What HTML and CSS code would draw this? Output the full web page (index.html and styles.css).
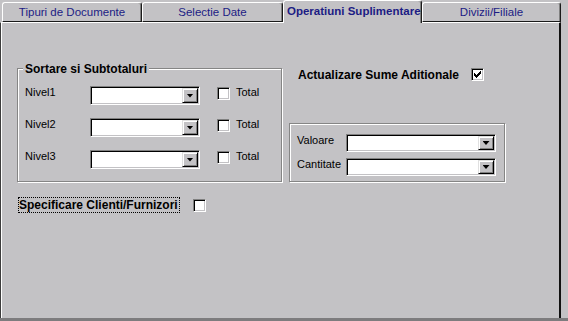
FILE: index.html
```html
<!DOCTYPE html>
<html lang="ro">
<head>
  <meta charset="UTF-8" />
  <meta name="viewport" content="width=device-width, initial-scale=1.0"/>
  <title>Operatiuni Suplimentare</title>
  <link rel="stylesheet" href="styles.css">
</head>
<body>
  <div class="window">
    <div class="tabs">
      <div class="tab tab-1">Tipuri de Documente</div>
      <div class="tab tab-2">Selectie Date</div>
      <div class="tab tab-3 active">Operatiuni Suplimentare</div>
      <div class="tab tab-4">Divizii/Filiale</div>
    </div>

    <div class="panel">
      <div class="main-row">
        <div class="group sort-group">
          <span class="group-title">Sortare si Subtotaluri</span>

          <div class="level-row">
            <span class="label level-label">Nivel1</span>
            <div class="combo level-combo"><span class="combo-btn"></span></div>
            <span class="check total-check"></span>
            <span class="label total-label">Total</span>
          </div>

          <div class="level-row">
            <span class="label level-label">Nivel2</span>
            <div class="combo level-combo"><span class="combo-btn"></span></div>
            <span class="check total-check"></span>
            <span class="label total-label">Total</span>
          </div>

          <div class="level-row">
            <span class="label level-label">Nivel3</span>
            <div class="combo level-combo"><span class="combo-btn"></span></div>
            <span class="check total-check"></span>
            <span class="label total-label">Total</span>
          </div>
        </div>

        <div class="right-col">
          <div class="opt-row">
            <span class="bold-label">Actualizare Sume Aditionale</span>
            <span class="check opt-check">
              <svg width="7" height="7" viewBox="0 0 7 7"><path d="M0 2h1v1h1v1h1V3h1V2h1V1h1V0h1v3H6v1H5v1H4v1H3v1H2V6H1V5H0z" fill="#000"/></svg>
            </span>
          </div>

          <div class="group value-group">
            <div class="value-row">
              <span class="label value-label">Valoare</span>
              <div class="combo value-combo"><span class="combo-btn"></span></div>
            </div>
            <div class="value-row">
              <span class="label value-label">Cantitate</span>
              <div class="combo value-combo"><span class="combo-btn"></span></div>
            </div>
          </div>
        </div>
      </div>

      <div class="spec-row">
        <span class="bold-label focus">Specificare Clienti/Furnizori</span>
        <span class="check spec-check"></span>
      </div>
    </div>

    <div class="bottom-bar"></div>
  </div>
</body>
</html>
```

FILE: styles.css
```css
body {
  margin: 0;
  background: #c3c2c5;
  font-family: 'Liberation Sans', Arial, sans-serif;
  font-size: 11px;
  color: #000;
}

.window {
  width: 568px;
  height: 321px;
  overflow: hidden;
}

/* tab strip */
.tabs {
  display: flex;
  align-items: flex-end;
  height: 22px;
  padding-left: 2px;
  box-sizing: border-box;
}

.tab {
  box-sizing: border-box;
  height: 20px;
  border: 1px solid;
  border-color: #fff #1a1a1a #1a1a1a #fff;
  border-radius: 3px 3px 0 0;
  box-shadow: inset -1px 0 0 #808080;
  color: #1c1c84;
  font-size: 11.5px;
  text-align: center;
  line-height: 18px;
  white-space: nowrap;
  overflow: hidden;
}

.tab-1 { width: 140px; }
.tab-2 { width: 141px; }
.tab-3 { width: 139px; }
.tab-4 { width: 139px; }

.tab.active {
  position: relative;
  z-index: 1;
  height: 23px;
  margin-bottom: -1px;
  border-bottom: none;
  background: #c3c2c5;
  text-align: left;
  padding-left: 3px;
  font-size: 11.5px;
  font-weight: bold;
  line-height: 21px;
}

/* panel */
.panel {
  box-sizing: border-box;
  width: 561px;
  height: 296px;
  border-top: 1px solid #fff;
  border-left: 1px solid #3c3c3c;
  border-right: 2px solid #111;
  box-shadow: inset 1px 0 0 #fff;
  padding-top: 45px;
}

.main-row {
  display: flex;
  gap: 7px;
  padding-left: 16px;
}

.group {
  position: relative;
  box-sizing: border-box;
  border: 1px solid #858585;
  box-shadow: inset 1px 1px 0 #fff, 1px 1px 0 #fff;
}

.group-title {
  position: absolute;
  top: -7px;
  left: 5px;
  padding: 0 2px;
  background: #c3c2c5;
  font-size: 12px;
  font-weight: bold;
  line-height: 14px;
}

.label {
  line-height: 13px;
}

.bold-label {
  font-size: 12px;
  font-weight: bold;
  line-height: 14px;
}

/* sortare */
.sort-group {
  width: 265px;
  height: 114px;
  padding: 17px 0 0 7px;
  display: flex;
  flex-direction: column;
  gap: 13px;
}

.level-row {
  display: flex;
  align-items: flex-start;
  height: 19px;
}

.level-label { width: 65px; }
.level-combo { width: 110px; height: 19px; }
.total-check { margin: 1px 0 0 17px; }
.total-label { margin-left: 6px; }

/* right column */
.right-col {
  width: 217px;
  display: flex;
  flex-direction: column;
  justify-content: space-between;
}

.opt-row {
  display: flex;
  align-items: center;
  height: 13px;
  padding-left: 9px;
}

.opt-check { margin-left: 12px; }

.value-group {
  width: 216px;
  height: 59px;
  padding: 10px 0 0 7px;
  display: flex;
  flex-direction: column;
  gap: 6px;
}

.value-row {
  display: flex;
  align-items: flex-start;
}

.value-label { width: 49px; }
.value-combo { width: 150px; height: 18px; }

/* specificare */
.spec-row {
  display: flex;
  align-items: center;
  margin-top: 15px;
  padding-left: 17px;
}

.focus {
  border: 1px dotted #000;
  padding: 0 1px 0 0;
}

.spec-check { margin-left: 13px; }

/* controls */
.combo {
  box-sizing: border-box;
  display: flex;
  justify-content: flex-end;
  padding: 1px;
  background: #fff;
  border: 1px solid;
  border-color: #808080 #fff #fff #808080;
  box-shadow: inset 1px 1px 0 #000, inset -1px -1px 0 #c3c2c5;
}

.combo-btn {
  box-sizing: border-box;
  width: 16px;
  height: 100%;
  display: flex;
  align-items: center;
  justify-content: center;
  background: #c3c2c5;
  border: 1px solid;
  border-color: #e0e0e0 #000 #000 #e0e0e0;
  box-shadow: inset 1px 1px 0 #fff, inset -1px -1px 0 #808080;
}

.combo-btn::after {
  content: "";
  width: 7px;
  height: 4px;
  background: #000;
  clip-path: polygon(0 0, 100% 0, 50% 100%);
}

.check {
  box-sizing: border-box;
  width: 13px;
  height: 13px;
  display: flex;
  align-items: center;
  justify-content: center;
  flex-shrink: 0;
  background: #fff;
  border: 1px solid;
  border-color: #808080 #fff #fff #808080;
  box-shadow: inset 1px 1px 0 #000, inset -1px -1px 0 #c3c2c5;
}

.bottom-bar {
  height: 3px;
  background: #7d7c7e;
}
```
